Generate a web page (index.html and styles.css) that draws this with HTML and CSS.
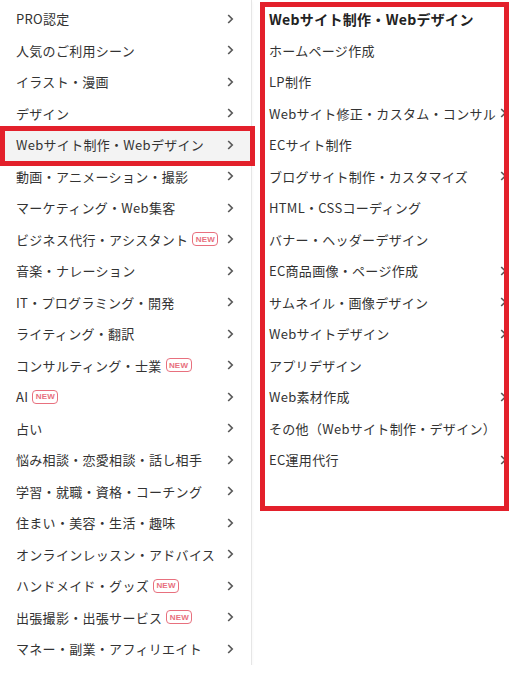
FILE: index.html
```html
<!DOCTYPE html>
<html lang="ja">
<head>
    <meta charset="UTF-8">
    <meta name="viewport" content="width=device-width, initial-scale=1.0">
    <title>カテゴリメニュー</title>
    <link rel="stylesheet" href="styles.css">
</head>
<body>
    <div class="menu">
        <ul class="main-cats">
            <li class="cat"><span class="label">PRO認定</span><span class="chev"></span></li>
            <li class="cat"><span class="label">人気のご利用シーン</span><span class="chev"></span></li>
            <li class="cat"><span class="label">イラスト・漫画</span><span class="chev"></span></li>
            <li class="cat"><span class="label">デザイン</span><span class="chev"></span></li>
            <li class="cat active"><span class="label">Webサイト制作・Webデザイン</span><span class="chev"></span></li>
            <li class="cat"><span class="label">動画・アニメーション・撮影</span><span class="chev"></span></li>
            <li class="cat"><span class="label">マーケティング・Web集客</span><span class="chev"></span></li>
            <li class="cat"><span class="label">ビジネス代行・アシスタント</span><span class="badge">NEW</span><span class="chev"></span></li>
            <li class="cat"><span class="label">音楽・ナレーション</span><span class="chev"></span></li>
            <li class="cat"><span class="label">IT・プログラミング・開発</span><span class="chev"></span></li>
            <li class="cat"><span class="label">ライティング・翻訳</span><span class="chev"></span></li>
            <li class="cat"><span class="label">コンサルティング・士業</span><span class="badge">NEW</span><span class="chev"></span></li>
            <li class="cat"><span class="label">AI</span><span class="badge">NEW</span><span class="chev"></span></li>
            <li class="cat"><span class="label">占い</span><span class="chev"></span></li>
            <li class="cat"><span class="label">悩み相談・恋愛相談・話し相手</span><span class="chev"></span></li>
            <li class="cat"><span class="label">学習・就職・資格・コーチング</span><span class="chev"></span></li>
            <li class="cat"><span class="label">住まい・美容・生活・趣味</span><span class="chev"></span></li>
            <li class="cat"><span class="label">オンラインレッスン・アドバイス</span><span class="chev"></span></li>
            <li class="cat"><span class="label">ハンドメイド・グッズ</span><span class="badge">NEW</span><span class="chev"></span></li>
            <li class="cat"><span class="label">出張撮影・出張サービス</span><span class="badge">NEW</span><span class="chev"></span></li>
            <li class="cat"><span class="label">マネー・副業・アフィリエイト</span><span class="chev"></span></li>
        </ul>
        <ul class="sub-cats">
            <li class="sub title">Webサイト制作・Webデザイン</li>
            <li class="sub">ホームページ作成</li>
            <li class="sub">LP制作</li>
            <li class="sub has-child">Webサイト修正・カスタム・コンサル<span class="chev"></span></li>
            <li class="sub">ECサイト制作</li>
            <li class="sub has-child">ブログサイト制作・カスタマイズ<span class="chev"></span></li>
            <li class="sub">HTML・CSSコーディング</li>
            <li class="sub">バナー・ヘッダーデザイン</li>
            <li class="sub has-child">EC商品画像・ページ作成<span class="chev"></span></li>
            <li class="sub has-child">サムネイル・画像デザイン<span class="chev"></span></li>
            <li class="sub has-child">Webサイトデザイン<span class="chev"></span></li>
            <li class="sub">アプリデザイン</li>
            <li class="sub has-child">Web素材作成<span class="chev"></span></li>
            <li class="sub">その他（Webサイト制作・デザイン）</li>
            <li class="sub has-child">EC運用代行<span class="chev"></span></li>
        </ul>
    </div>
</body>
</html>
```

FILE: styles.css
```css
body {
    margin: 0;
    background-color: #fff;
    font-family: "Noto Sans CJK JP", "Noto Sans", sans-serif;
    font-size: 13px;
    letter-spacing: 0.3px;
    color: #333;
}
ul {
    list-style: none;
    margin: 0;
    padding: 0;
}
.menu {
    display: flex;
    width: 518px;
}
.main-cats {
    width: 251px;
    padding-top: 3px;
    border-right: 1px solid #e6e6e6;
    height: 662px;
    box-shadow: 0 2px 3px rgba(0, 0, 0, 0.05);
}
.cat {
    position: relative;
    display: flex;
    align-items: center;
    height: 31.5px;
    padding: 0 17px 0 16px;
    white-space: nowrap;
}
.cat .label {
    margin-right: 4px;
}
.cat .chev {
    margin-left: auto;
}
.cat.active {
    background-color: #f3f3f3;
}
.cat.active::after {
    content: "";
    position: absolute;
    top: -3px;
    bottom: -5px;
    left: 0;
    right: -4px;
    border: 5px solid #e3202b;
    z-index: 2;
}
.badge {
    display: inline-flex;
    align-items: center;
    justify-content: center;
    width: 24px;
    height: 12px;
    border: 1px solid #e8707e;
    border-radius: 4px;
    color: #e8707e;
    font-size: 8px;
    font-weight: bold;
    font-family: "Liberation Sans", Arial, sans-serif;
    letter-spacing: 0.2px;
}
.chev {
    display: inline-block;
    width: 7px;
    height: 10px;
    background: url("data:image/svg+xml,%3Csvg xmlns='http://www.w3.org/2000/svg' width='7' height='10' viewBox='0 0 7 10'%3E%3Cpolyline points='1.2,1 5.2,5 1.2,9' fill='none' stroke='%23595959' stroke-width='1.7'/%3E%3C/svg%3E") no-repeat center;
}
.sub-cats {
    position: relative;
    flex: 1;
    padding: 3px 0 0 17px;
    height: 508px;
}
.sub-cats::after {
    content: "";
    position: absolute;
    top: 2px;
    left: 8px;
    width: 249px;
    height: 509px;
    box-sizing: border-box;
    border: 5px solid #e3202b;
}
.sub {
    display: flex;
    align-items: center;
    height: 31.5px;
    padding-right: 11px;
    white-space: nowrap;
}
.sub .chev {
    margin-left: auto;
}
.sub.title {
    font-weight: bold;
    font-size: 14px;
    color: #222;
}
```
